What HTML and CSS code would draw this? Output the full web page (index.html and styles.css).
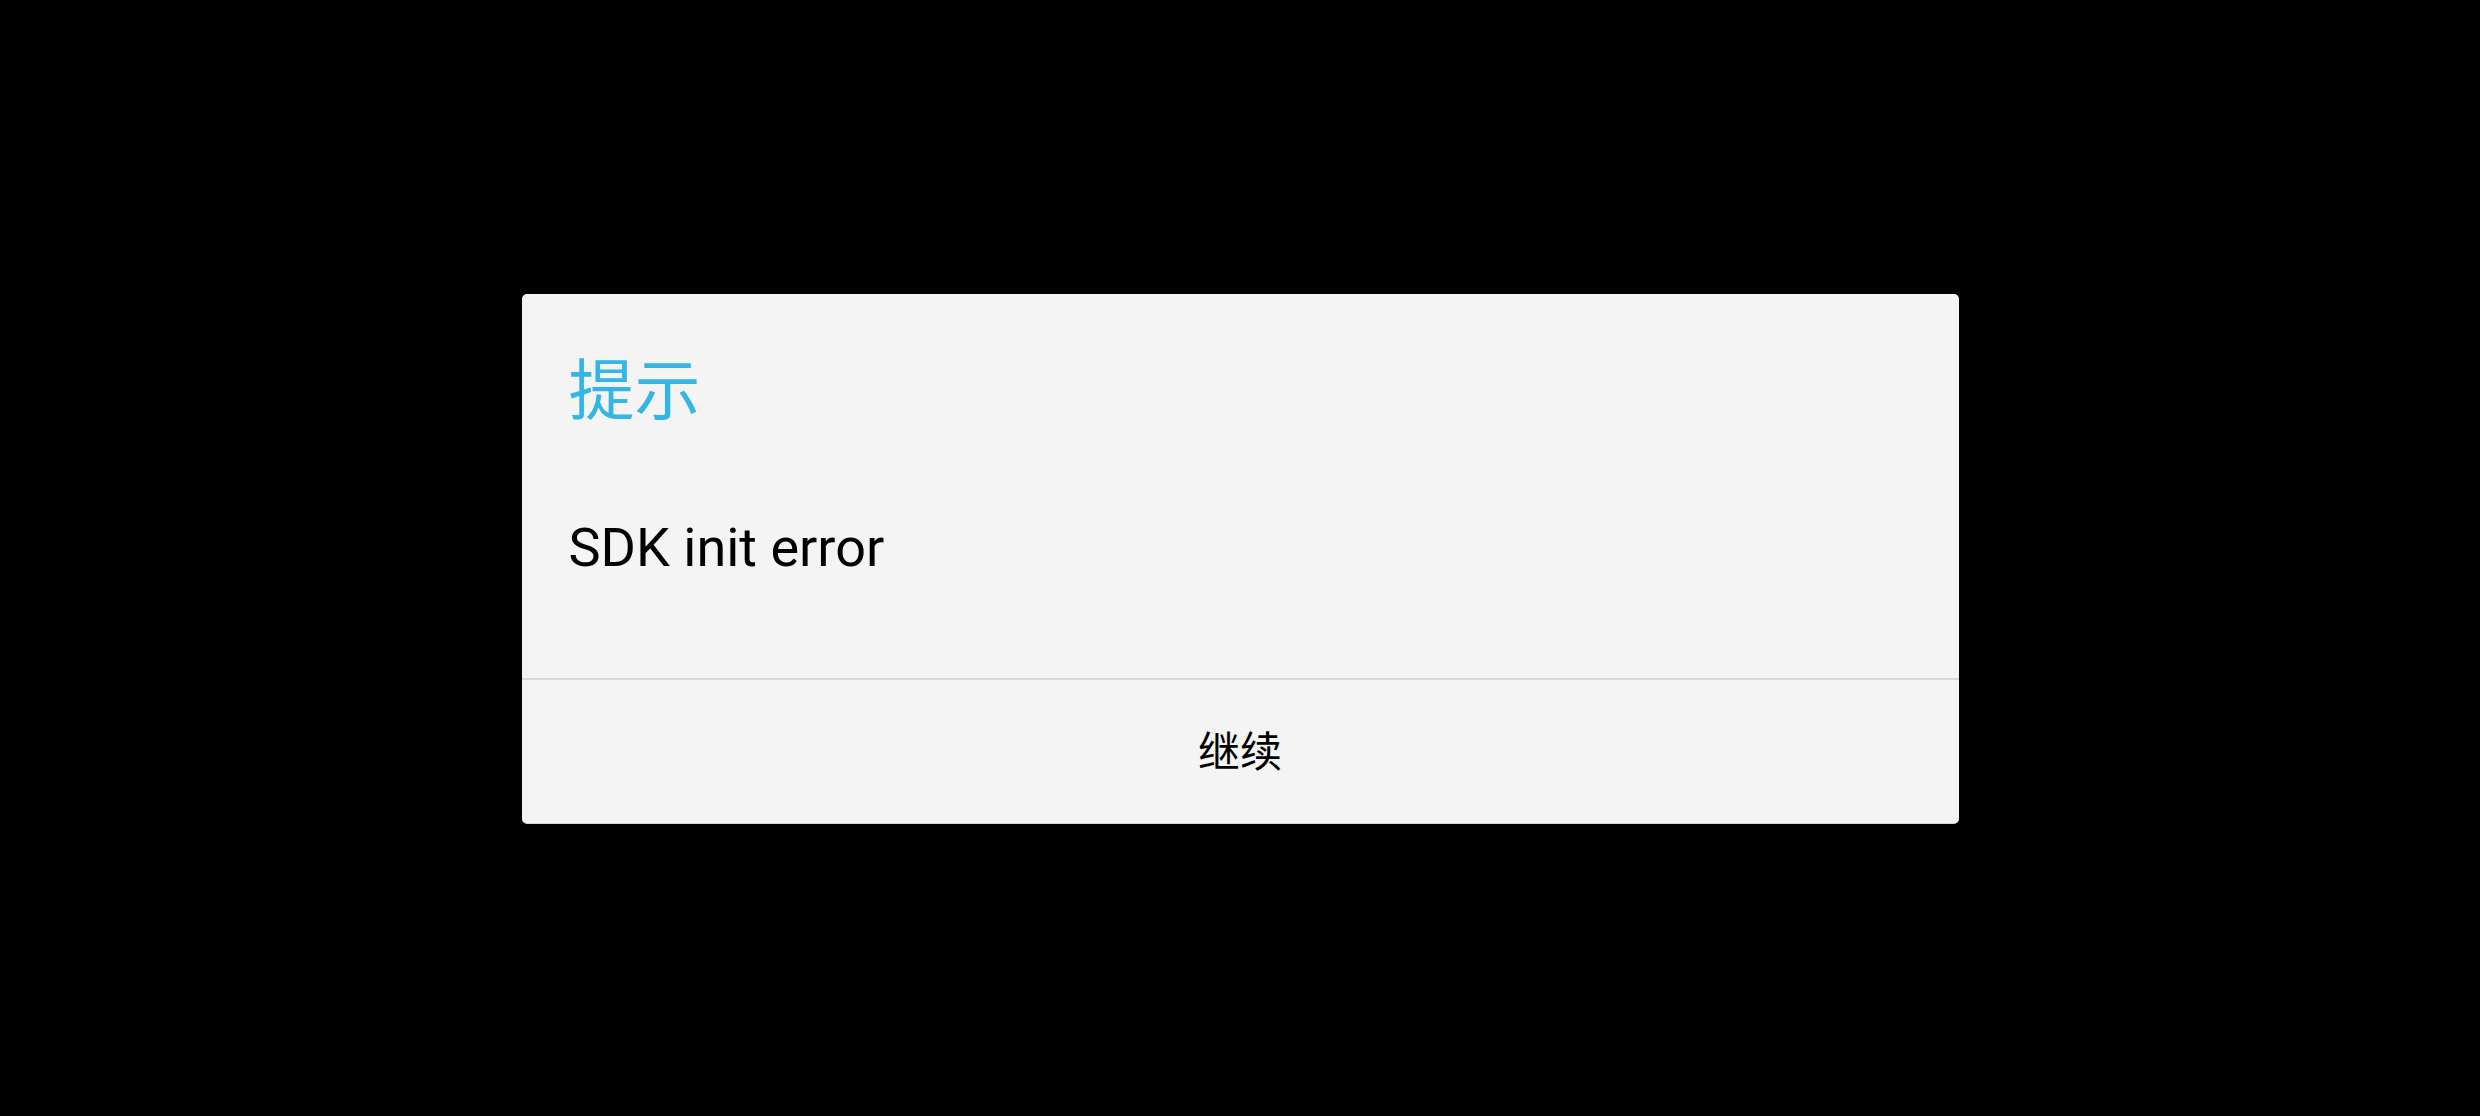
FILE: index.html
```html
<!DOCTYPE html>
<html lang="zh">
<head>
<meta charset="utf-8">
<title>提示</title>
<link rel="stylesheet" href="styles.css">
</head>
<body>
<div class="screen">
  <div class="dialog">
    <div class="dialog-body">
      <div class="dialog-title">提示</div>
      <div class="dialog-message">SDK init error</div>
    </div>
    <div class="dialog-actions">
      <button class="dialog-button">继续</button>
    </div>
  </div>
</div>
</body>
</html>
```

FILE: styles.css
```css
html, body {
  margin: 0;
  padding: 0;
  background: #000;
  height: 100%;
}
.screen {
  height: 1116px;
  width: 2480px;
  display: flex;
  align-items: center;
  justify-content: center;
}
.dialog {
  width: 1437px;
  height: 529px;
  background: #f4f4f4;
  border-radius: 5px;
  display: flex;
  flex-direction: column;
  box-shadow: 0 1px 0 #d4d4d4;
  font-family: Roboto, "Noto Sans CJK SC", sans-serif;
}
.dialog-body {
  padding: 58px 47px 0 47px;
  height: 386px;
  box-sizing: border-box;
  border-bottom: 2px solid #d8d8d8;
}
.dialog-title {
  font-family: "Noto Sans CJK SC", sans-serif;
  font-size: 66px;
  line-height: 66px;
  color: #33b5e5;
}
.dialog-message {
  margin-top: 102px;
  font-family: Roboto, sans-serif;
  font-size: 54px;
  line-height: 55px;
  color: #000;
}
.dialog-actions {
  flex: 1;
  display: flex;
}
.dialog-button {
  flex: 1;
  border: none;
  background: transparent;
  padding: 0 0 5px 0;
  font-family: "Noto Sans CJK SC", sans-serif;
  font-size: 42px;
  color: #000;
}
```
